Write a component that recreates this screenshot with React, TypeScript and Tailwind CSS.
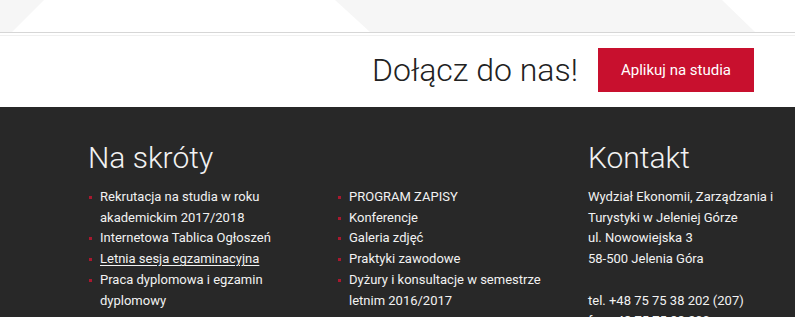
const shortcutsLeft = [
  { label: 'Rekrutacja na studia w roku akademickim 2017/2018' },
  { label: 'Internetowa Tablica Ogłoszeń' },
  { label: 'Letnia sesja egzaminacyjna', underline: true },
  { label: 'Praca dyplomowa i egzamin dyplomowy' },
]

const shortcutsRight = [
  { label: 'PROGRAM ZAPISY' },
  { label: 'Konferencje' },
  { label: 'Galeria zdjęć' },
  { label: 'Praktyki zawodowe' },
  { label: 'Dyżury i konsultacje w semestrze letnim 2016/2017' },
]

function LinkList({ items }: { items: { label: string; underline?: boolean }[] }) {
  return (
    <ul className="ml-[1px] pr-[28px] text-[13px] leading-[20.7px] text-[#f2f2f2]">
      {items.map((item) => (
        <li key={item.label} className="flex items-start">
          <span className="mr-[8px] mt-[9px] h-[3px] w-[3px] shrink-0 bg-[#a8192f]" />
          <span className={item.underline ? 'underline underline-offset-2' : ''}>{item.label}</span>
        </li>
      ))}
    </ul>
  )
}

export default function App() {
  return (
    <div className="w-[795px] h-[317px] overflow-hidden bg-white font-['Roboto',sans-serif]">
      {/* Decorative top band */}
      <div className="border-b border-[#d6d6d6]">
        <svg className="block h-[32px] w-full" viewBox="0 0 795 32" preserveAspectRatio="none">
          <polygon points="0,0 44,0 12,32 0,32" fill="#f6f6f6" />
          <polygon points="335,0 722,0 755,32 370,32" fill="#f6f6f6" />
        </svg>
      </div>
      <div className="mt-[2px] border-t border-[#f0f0f0]" />

      {/* Call to action */}
      <div className="flex h-[71px] items-center justify-end pb-[3px] pr-[41px]">
        <span className="mr-[20px] text-[32px] font-light leading-none text-[#222]">Dołącz do nas!</span>
        <button className="h-[44px] bg-[#c8102e] px-[23px] text-[15px] text-white">Aplikuj na studia</button>
      </div>

      {/* Footer */}
      <div className="h-[210px] bg-[#282828] pl-[88px] pt-[33px]">
        <div className="grid grid-cols-[249px_251px_1fr]">
          <div className="col-span-2">
            <h2 className="text-[30px] font-light leading-[36px] text-[#f2f2f2]">Na skróty</h2>
            <div className="mt-[11px] grid grid-cols-[249px_251px]">
              <LinkList items={shortcutsLeft} />
              <LinkList items={shortcutsRight} />
            </div>
          </div>
          <div>
            <h2 className="text-[30px] font-light leading-[36px] text-[#f2f2f2]">Kontakt</h2>
            <p className="mt-[11px] pr-[10px] text-[13px] leading-[20.7px] text-[#f2f2f2]">
              Wydział Ekonomii, Zarządzania i Turystyki w Jeleniej Górze
              <br />
              ul. Nowowiejska 3
              <br />
              58-500 Jelenia Góra
              <br />
              <br />
              tel. +48 75 75 38 202 (207)
              <br />
              fax +48 75 75 38 200
            </p>
          </div>
        </div>
      </div>
    </div>
  )
}
